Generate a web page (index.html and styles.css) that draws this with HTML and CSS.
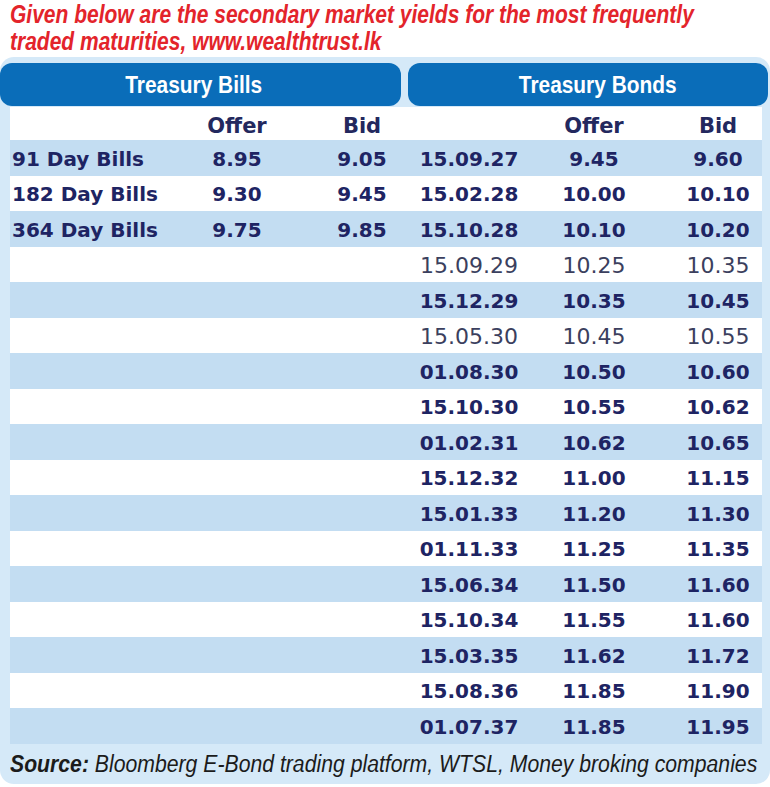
FILE: index.html
```html
<!DOCTYPE html>
<html>
<head>
<meta charset="utf-8">
<link rel="stylesheet" href="styles.css">
</head>
<body>
<div class="page">
  <div class="title">
    <div class="tline"><span class="narrow">Given below are the secondary market yields for the most frequently</span></div>
    <div class="tline"><span class="narrow">traded maturities, www.wealthtrust.lk</span></div>
  </div>
  <div class="box">
    <div class="heads">
      <div class="pill pill-bills"><span class="ptext">Treasury Bills</span></div>
      <div class="pill pill-bonds"><span class="ptext">Treasury Bonds</span></div>
    </div>
    <div class="table">
      <div class="row hdr"><div class="c1"></div><div class="c2">Offer</div><div class="c3">Bid</div><div class="c4"></div><div class="c5">Offer</div><div class="c6">Bid</div></div>
      <div class="row alt"><div class="c1">91 Day Bills</div><div class="c2">8.95</div><div class="c3">9.05</div><div class="c4">15.09.27</div><div class="c5">9.45</div><div class="c6">9.60</div></div>
      <div class="row"><div class="c1">182 Day Bills</div><div class="c2">9.30</div><div class="c3">9.45</div><div class="c4">15.02.28</div><div class="c5">10.00</div><div class="c6">10.10</div></div>
      <div class="row alt"><div class="c1">364 Day Bills</div><div class="c2">9.75</div><div class="c3">9.85</div><div class="c4">15.10.28</div><div class="c5">10.10</div><div class="c6">10.20</div></div>
      <div class="row light"><div class="c1"></div><div class="c2"></div><div class="c3"></div><div class="c4">15.09.29</div><div class="c5">10.25</div><div class="c6">10.35</div></div>
      <div class="row alt"><div class="c1"></div><div class="c2"></div><div class="c3"></div><div class="c4">15.12.29</div><div class="c5">10.35</div><div class="c6">10.45</div></div>
      <div class="row light"><div class="c1"></div><div class="c2"></div><div class="c3"></div><div class="c4">15.05.30</div><div class="c5">10.45</div><div class="c6">10.55</div></div>
      <div class="row alt"><div class="c1"></div><div class="c2"></div><div class="c3"></div><div class="c4">01.08.30</div><div class="c5">10.50</div><div class="c6">10.60</div></div>
      <div class="row"><div class="c1"></div><div class="c2"></div><div class="c3"></div><div class="c4">15.10.30</div><div class="c5">10.55</div><div class="c6">10.62</div></div>
      <div class="row alt"><div class="c1"></div><div class="c2"></div><div class="c3"></div><div class="c4">01.02.31</div><div class="c5">10.62</div><div class="c6">10.65</div></div>
      <div class="row"><div class="c1"></div><div class="c2"></div><div class="c3"></div><div class="c4">15.12.32</div><div class="c5">11.00</div><div class="c6">11.15</div></div>
      <div class="row alt"><div class="c1"></div><div class="c2"></div><div class="c3"></div><div class="c4">15.01.33</div><div class="c5">11.20</div><div class="c6">11.30</div></div>
      <div class="row"><div class="c1"></div><div class="c2"></div><div class="c3"></div><div class="c4">01.11.33</div><div class="c5">11.25</div><div class="c6">11.35</div></div>
      <div class="row alt"><div class="c1"></div><div class="c2"></div><div class="c3"></div><div class="c4">15.06.34</div><div class="c5">11.50</div><div class="c6">11.60</div></div>
      <div class="row"><div class="c1"></div><div class="c2"></div><div class="c3"></div><div class="c4">15.10.34</div><div class="c5">11.55</div><div class="c6">11.60</div></div>
      <div class="row alt"><div class="c1"></div><div class="c2"></div><div class="c3"></div><div class="c4">15.03.35</div><div class="c5">11.62</div><div class="c6">11.72</div></div>
      <div class="row"><div class="c1"></div><div class="c2"></div><div class="c3"></div><div class="c4">15.08.36</div><div class="c5">11.85</div><div class="c6">11.90</div></div>
      <div class="row alt"><div class="c1"></div><div class="c2"></div><div class="c3"></div><div class="c4">01.07.37</div><div class="c5">11.85</div><div class="c6">11.95</div></div>
    </div>
    <div class="source"><span class="stext"><b>Source:</b> Bloomberg E-Bond trading platform, WTSL, Money broking companies</span></div>
  </div>
</div>
</body>
</html>
```
FILE: styles.css
```css
html, body {
  margin: 0;
  padding: 0;
  background: #ffffff;
}
.page {
  width: 770px;
  height: 787px;
  overflow: hidden;
  position: relative;
}
.title {
  padding: 1px 0 0 10px;
  height: 56px;
  box-sizing: border-box;
  color: #e3242b;
  font-family: "Liberation Sans", Arial, sans-serif;
  font-weight: bold;
  font-style: italic;
  font-size: 25px;
  line-height: 27px;
  white-space: nowrap;
}
.narrow {
  display: inline-block;
  transform: scaleX(0.84);
  transform-origin: left center;
}
.box {
  margin-top: 1px;
  height: 727px;
  background: #d5e9f8;
  border-radius: 14px;
  padding-top: 6px;
  box-sizing: border-box;
}
.heads {
  display: flex;
  height: 43px;
  gap: 7px;
}
.pill {
  background: #0a6db9;
  border-radius: 12px;
  display: flex;
  align-items: center;
  justify-content: center;
  color: #ffffff;
  font-family: "Liberation Sans", Arial, sans-serif;
  font-weight: bold;
  font-size: 24px;
  white-space: nowrap;
}
.ptext {
  display: inline-block;
  transform: scaleX(0.87);
}
.pill-bills { width: 401px; }
.pill-bills .ptext { margin-right: 14px; }
.pill-bonds { width: 360px; }
.pill-bonds .ptext { margin-left: 20px; }
.table {
  margin: 1px 0 0 10px;
  width: 752px;
  font-family: "DejaVu Sans", Verdana, sans-serif;
  font-weight: bold;
  font-size: 20px;
  color: #1e2463;
}
.row {
  display: grid;
  grid-template-columns: 150px 154px 96px 118px 132px 102px;
  height: 35.5px;
  align-items: center;
  background: #ffffff;
  white-space: nowrap;
  padding-top: 2px;
  box-sizing: border-box;
}
.row.hdr {
  height: 33px;
  font-size: 21px;
  color: #23285e;
  padding-top: 4px;
}
.row.alt { background: #c3ddf2; }
.row.light {
  font-weight: normal;
  font-size: 22px;
  color: #3b3f5e;
}
.c1 { padding-left: 2px; }
.c2, .c3, .c4, .c5, .c6 { text-align: center; }
.c6 { padding-left: 14px; }
.source {
  height: 41px;
  display: flex;
  align-items: center;
  padding-left: 10px;
  font-family: "Liberation Sans", Arial, sans-serif;
  font-style: italic;
  font-size: 23px;
  color: #1b1b1b;
  white-space: nowrap;
}
.stext {
  display: inline-block;
  transform: scaleX(0.922);
  transform-origin: left center;
}
```
